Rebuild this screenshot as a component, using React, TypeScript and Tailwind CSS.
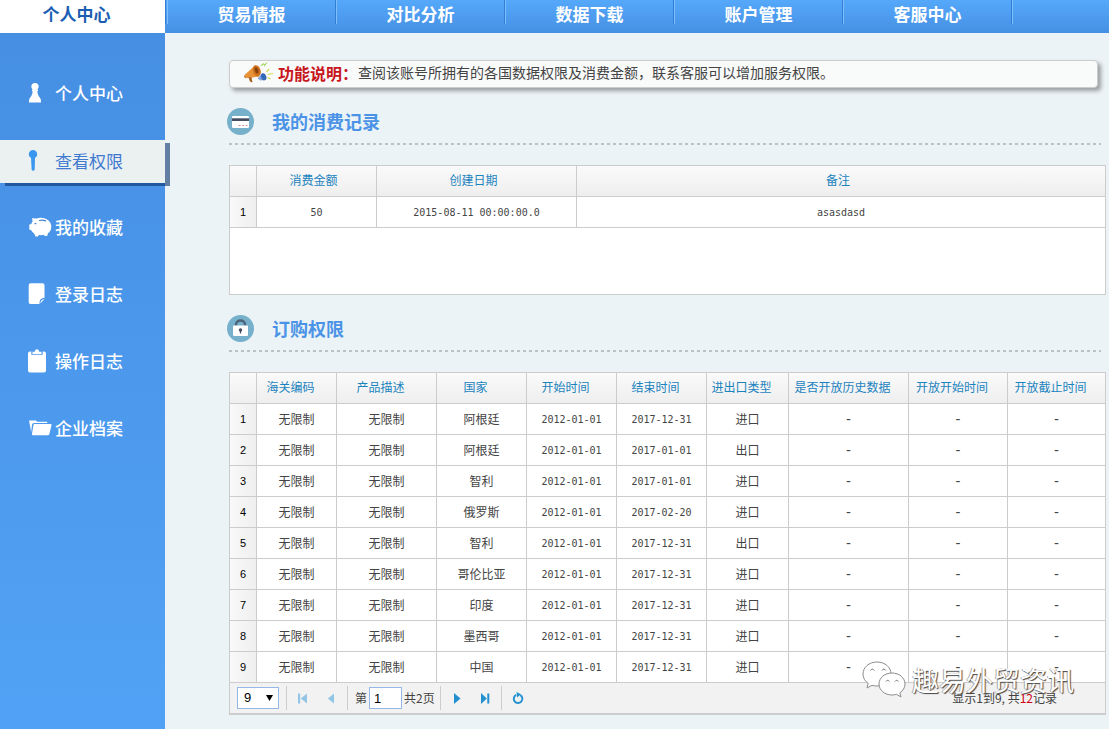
import type { ReactNode } from "react";

const navItems = ["贸易情报", "对比分析", "数据下载", "账户管理", "客服中心"];

function PawnIcon() {
  return (
    <svg width="14" height="20" viewBox="0 0 14 20" fill="currentColor">
      <path d="M7 0C9.400 0 10.700 1.600 10.700 3.500c0 1.200-.6 2-1.300 2.700l.6.5v1.200l-.7.6c.3 3 1.500 4.800 2.800 6.500.8 1 .9 2.500.9 4.500H1c0-2 .1-3.500.9-4.500 1.300-1.700 2.500-3.500 2.800-6.500L4 7.900V6.700l.6-.5C3.900 5.500 3.300 4.700 3.300 3.500 3.300 1.600 4.600 0 7 0z" />
    </svg>
  );
}

function KeyIcon() {
  return (
    <svg width="10" height="21" viewBox="0 0 10 21" fill="#3b97ee">
      <path d="M5 0a4.200 4.200 0 0 1 4.200 4.200c0 1.700-1 2.900-2.200 3.500l-.3 12-1.500 1.300L3.700 20 3 7.700C1.800 7.100.8 5.900.8 4.200A4.200 4.200 0 0 1 5 0z" />
    </svg>
  );
}

function PiggyIcon() {
  return (
    <svg width="24" height="21" viewBox="0 0 24 21">
      <path
        d="M4 1.200 8.700 1.600C10.500.9 12.300.6 14.500 1c5 .5 8.800 3.900 8.800 8.400 0 3.200-1.200 5.500-3.400 6.900l-.7 2.700h-2.600l-.7-1.200c-1.700.4-3.400.4-5 .2L9.900 19.500H7.500L6.200 16.500c-1.400-.8-2.300-1.900-2.900-3.200L1.300 12.500V7.500l2-.6c.3-.9.800-1.700 1.300-2.300z"
        fill="#fff"
      />
      <path d="M11.500 3.500c2-.5 4.200-.4 6 .4M7 6.700h.8" fill="none" stroke="#3f7fd0" strokeWidth="1.200" strokeLinecap="round" />
    </svg>
  );
}

function NoteIcon() {
  return (
    <svg width="18" height="22" viewBox="0 0 18 22" fill="#fff">
      <path d="M2.500 0.300h12a2 2 0 0 1 2 2v12.800h-1.500c-2.300.4-3.800 2.600-3.500 5.900H2.500a1.800 1.800 0 0 1-1.800-1.800V2.100A1.800 1.800 0 0 1 2.500.3z" />
      <path d="M16.500 16l-4.200 4.500c0-2.500 1.700-4.300 4.200-4.500z" />
    </svg>
  );
}

function ClipboardIcon() {
  return (
    <svg width="18" height="24" viewBox="0 0 18 24" fill="#fff">
      <path d="M2 2.500h1.300v3.300h11.400V2.500H16a2 2 0 0 1 2 2v17a2 2 0 0 1-2 2H2a2 2 0 0 1-2-2v-17a2 2 0 0 1 2-2z" />
      <path d="M4.500 4.900V2.800h2.300C7 1.200 7.600.2 9 .2s2 1 2.200 2.600h2.300v2.100z" />
    </svg>
  );
}

function FolderIcon() {
  return (
    <svg width="24" height="17" viewBox="0 0 24 17" fill="#fff">
      <path d="M1 .5h7L9.200 1.800h10v1.200H6a2 2 0 0 0-2 1.600L3.200 12z" />
      <path d="M7 4h15.500a1 1 0 0 1 1 1.200l-2.200 9a1.400 1.400 0 0 1-1.400 1H5a1 1 0 0 1-1-1.200l1.400-8.700A1.500 1.500 0 0 1 7 4z" />
    </svg>
  );
}

const sideItems: { label: string; icon: ReactNode; active?: boolean }[] = [
  { label: "个人中心", icon: <PawnIcon /> },
  { label: "查看权限", icon: <KeyIcon />, active: true },
  { label: "我的收藏", icon: <PiggyIcon /> },
  { label: "登录日志", icon: <NoteIcon /> },
  { label: "操作日志", icon: <ClipboardIcon /> },
  { label: "企业档案", icon: <FolderIcon /> },
];

function Megaphone() {
  return (
    <svg width="30" height="24" viewBox="0 0 30 24" aria-hidden="true">
      <path d="M.5 14 11 4.500l4 11-9.500 1.500L1.500 17z" fill="#e8923a" />
      <path d="m4.500 16.500 3-.3 1 5.300-2.500-1z" fill="#a5601f" />
      <path d="m.5 14 1.500 3.500L.2 16z" fill="#a5601f" />
      <ellipse cx="12.800" cy="9.800" rx="3.800" ry="5.800" transform="rotate(-18 12.800 9.800)" fill="#d0721c" />
      <ellipse cx="12.600" cy="9.400" rx="1.800" ry="3.300" transform="rotate(-18 12.600 9.400)" fill="#8a430f" />
      <path d="m13.500 17.500 4.500-5 3.500 6-5 1z" fill="#7ea5de" />
      <ellipse cx="19.700" cy="15.800" rx="2.600" ry="3.700" transform="rotate(-18 19.700 15.800)" fill="#3568b8" />
      <path d="m16 5 4-3.200-.7 2.300L24 .8l-4 5 .3-2z" fill="#8fcf3c" />
      <path d="m22.500 11 2.500-3M23.500 13.500l5.500-1M23.500 16.500l3 1.500" stroke="#cfdc50" strokeWidth="1.200" />
    </svg>
  );
}

function CardBadge() {
  return (
    <svg width="27" height="27" viewBox="0 0 27 27" aria-hidden="true">
      <circle cx="13.500" cy="13.500" r="13.500" fill="#76b0cb" />
      <rect x="5" y="8" width="17" height="12" rx="1.200" fill="#fff" />
      <rect x="5" y="10.300" width="17" height="2.700" fill="#434c60" />
      <path d="M11.500 17.500h2M15 17.500h2M18.500 17.500h2" stroke="#e39a9a" strokeWidth="1.200" />
    </svg>
  );
}

function LockBadge() {
  return (
    <svg width="27" height="27" viewBox="0 0 27 27" aria-hidden="true">
      <circle cx="13.500" cy="13.500" r="13.500" fill="#76b0cb" />
      <path d="M9 10.500V9.500a4.500 4.000 0 0 1 9 0v1" fill="none" stroke="#4c6378" strokeWidth="2.400" />
      <rect x="6" y="10.500" width="15" height="10.500" rx="1" fill="#fff" />
      <circle cx="13.500" cy="15" r="1.700" fill="#434c60" />
      <path d="M13.500 15v3.500" stroke="#434c60" strokeWidth="1.200" />
    </svg>
  );
}

function SectionHeading({ icon, title }: { icon: ReactNode; title: string }) {
  return (
    <header className="mr-[5px] pt-5 pb-5">
      <div className="-ml-0.5 flex h-[27px] items-center gap-[18px]">
        {icon}
        <h2 className="text-[18px] leading-[27px] font-bold text-[#4b93e6]">{title}</h2>
      </div>
      <div className="mt-2 h-0.5 bg-[repeating-linear-gradient(90deg,#bbc2c4_0_3px,transparent_3px_6px)]" />
    </header>
  );
}

const edge = "border-r border-b border-[#ccc]";
const headCell = "border-r border-b border-[#ccc] pb-0.5 text-[12px] font-normal text-[#1b83be]";
const numberCell =
  "border-r border-b border-[#ccc] bg-linear-to-r from-[#f9f9f9] to-[#efefef] font-['Liberation_Sans'] text-[11px] font-normal text-black";
const mono = "font-['DejaVu_Sans_Mono','Noto_Sans_CJK_SC',monospace] text-[10px]";
const dash = "font-['DejaVu_Sans_Mono','Noto_Sans_CJK_SC',monospace] text-[14px] leading-4";

const columns = [
  { label: "海关编码", width: "w-[80px]" },
  { label: "产品描述", width: "w-[100px]" },
  { label: "国家", width: "w-[90px]" },
  { label: "开始时间", width: "w-[90px]" },
  { label: "结束时间", width: "w-[90px]" },
  { label: "进出口类型", width: "w-[82px]" },
  { label: "是否开放历史数据", width: "w-[120px]" },
  { label: "开放开始时间", width: "w-[99px]" },
  { label: "开放截止时间", width: "" },
];

const rows = [
  ["阿根廷", "2017-12-31", "进口"],
  ["阿根廷", "2017-01-01", "出口"],
  ["智利", "2017-01-01", "进口"],
  ["俄罗斯", "2017-02-20", "进口"],
  ["智利", "2017-12-31", "出口"],
  ["哥伦比亚", "2017-12-31", "进口"],
  ["印度", "2017-12-31", "进口"],
  ["墨西哥", "2017-12-31", "进口"],
  ["中国", "2017-12-31", "进口"],
];

function PagerDivider() {
  return <span className="h-6 w-px bg-[#ccc]" />;
}

function PagerButton({ label, disabled, children }: { label: string; disabled?: boolean; children: ReactNode }) {
  return (
    <button
      type="button"
      aria-label={label}
      disabled={disabled}
      className="flex h-6 w-7 items-center justify-center text-[#2390d0] disabled:text-[#92c6e4]"
    >
      {children}
    </button>
  );
}

function Pager() {
  return (
    <div className="flex h-8 items-center border-b-2 border-[#ccc] bg-[#f2f2f2] pl-[7px] text-[12px] text-[#444]">
      <div className="relative mr-[7px]">
        <select
          aria-label="每页条数"
          defaultValue="9"
          className="h-[22px] w-[42px] appearance-none border border-[#95b8e7] bg-white pl-1.5 font-['Liberation_Sans'] text-[13px] text-black"
        >
          <option>9</option>
          <option>18</option>
          <option>27</option>
        </select>
        <svg className="pointer-events-none absolute top-2 right-1.5" width="7" height="6" viewBox="0 0 7 6">
          <path d="M0 0h7L3.500 6z" fill="#000" />
        </svg>
      </div>
      <PagerDivider />
      <div className="flex px-0.5">
        <PagerButton label="首页" disabled>
          <svg width="10" height="11" viewBox="0 0 10 11" fill="currentColor">
            <path d="M0 .5h2.200v10H0zM9 .5v10L2.800 5.500z" />
          </svg>
        </PagerButton>
        <PagerButton label="上一页" disabled>
          <svg width="8" height="11" viewBox="0 0 8 11" fill="currentColor">
            <path d="M7 .5v10L.8 5.500z" />
          </svg>
        </PagerButton>
      </div>
      <PagerDivider />
      <label htmlFor="page" className="pl-[7px]">第</label>
      <input
        id="page"
        defaultValue="1"
        className="mx-0.5 h-[22px] w-[33px] border border-[#95b8e7] bg-white px-1 font-['Liberation_Sans'] text-[13px] text-black"
      />
      <span className="w-9">共2页</span>
      <PagerDivider />
      <div className="flex px-0.5">
        <PagerButton label="下一页">
          <svg width="8" height="11" viewBox="0 0 8 11" fill="currentColor">
            <path d="M1 0v11l6.500-5.500z" />
          </svg>
        </PagerButton>
        <PagerButton label="末页">
          <svg width="10" height="11" viewBox="0 0 10 11" fill="currentColor">
            <path d="M1 0v11l5.800-5.500zM7.300.5h2v10h-2z" />
          </svg>
        </PagerButton>
      </div>
      <PagerDivider />
      <div className="px-0.5">
        <PagerButton label="刷新">
          <svg width="12" height="13" viewBox="0 0 12 13" fill="none">
            <path d="M8.300 3.100a4.300 4.300 0 1 1-4.100-.2" stroke="currentColor" strokeWidth="1.900" />
            <path d="M4.500 0 9 2.300 5.200 5.600z" fill="currentColor" />
          </svg>
        </PagerButton>
      </div>
      <p className="ml-auto pr-12">
        显示1到9, 共<span className="text-[#d00018]">12</span>记录
      </p>
    </div>
  );
}

function Watermark() {
  return (
    <div className="pointer-events-none absolute right-8 bottom-4 flex items-center gap-1.5">
      <svg width="44" height="38" viewBox="0 0 44 38" fill="#fff" stroke="#8c8c8c" strokeWidth="1">
        <path d="M15 1C7 1 1 6.300 1 13c0 4 2 7.200 5.200 9.400L5 27l5-2.700c1.600.5 3.300.7 5 .7 8 0 14-5.300 14-12S23 1 15 1z" />
        <path d="M30 12c-7.200 0-13 4.900-13 11s5.800 11 13 11c1.600 0 3.100-.2 4.500-.7L39 36l-1.200-4.200C41 29.800 43 26.600 43 23c0-6.100-5.800-11-13-11z" />
        <path d="M8.500 9.500c.8-1.800 3-1.800 3.800 0M20 9.500c.8-1.800 3-1.800 3.800 0M24 20.500c.7-1.600 2.700-1.600 3.400 0M33 20.500c.7-1.600 2.700-1.600 3.400 0" fill="none" stroke="#777" />
      </svg>
      <span className="text-[27px] leading-9 text-white [text-shadow:1px_1px_1px_#444,-1px_0_0_#aaa]">趣易外贸资讯</span>
    </div>
  );
}

export default function App() {
  return (
    <div className="flex min-h-screen flex-col bg-[#ebf3f6] font-['Noto_Sans_CJK_SC',sans-serif] text-[#444]">
      <nav className="flex h-[33px] bg-linear-to-b from-[#55a8fa] to-[#4690e4] text-[17px] leading-7 font-bold text-white">
        <a href="#center" className="w-[165px] bg-white pr-3 text-center text-[#1a5fb4]">
          个人中心
        </a>
        <span className="h-6 w-[3px] border-x border-l-[#2f7fd6] border-r-[#7fbdfb]" />
        {navItems.map((label) => (
          <a key={label} href="#" className="flex w-[169px]">
            <span className="grow text-center">{label}</span>
            <span className="h-6 w-0.5 border-r border-[#7fbdfb] bg-[#2f7fd6]" />
          </a>
        ))}
      </nav>

      <div className="flex grow">
        <aside className="w-[165px] shrink-0 bg-linear-to-b from-[#468fe3] to-[#51a2f6] pt-10">
          <nav className="flex flex-col gap-6">
            {sideItems.map(({ label, icon, active }) => (
              <a
                key={label}
                href="#"
                className={
                  active
                    ? "flex h-[43px] items-center bg-[#ebf0f1] pb-0.5 pl-7 text-[17px] text-[#3f7ad0] shadow-[5px_3px_0_rgba(10,50,110,0.6)]"
                    : "flex h-[43px] items-center pb-[3px] pl-7 text-[17px] font-medium text-white"
                }
              >
                <span className="flex w-[27px]">{icon}</span>
                {label}
              </a>
            ))}
          </nav>
        </aside>

        <main className="min-w-0 grow pt-[27px] pr-[3px] pb-3.5 pl-16">
          <p className="mr-2 flex h-7 items-center rounded-sm border border-[#ccc] bg-[#f9fafa] pb-[3px] pl-3.5 text-[14px] shadow-[3px_3px_4px_rgba(0,0,0,0.35)]">
            <Megaphone />
            <strong className="ml-1 text-[16px] text-[#c8161d]">功能说明：</strong>
            查阅该账号所拥有的各国数据权限及消费金额，联系客服可以增加服务权限。
          </p>

          <section>
            <SectionHeading icon={<CardBadge />} title="我的消费记录" />
            <div className="h-[130px] border border-[#ccc] bg-white">
              <table className="w-full table-fixed border-separate border-spacing-0 text-center">
                <thead>
                  <tr className="h-[31px] bg-linear-to-b from-[#fafafa] to-[#eee]">
                    <th className={`${headCell} w-[27px]`} />
                    <th className={`${headCell} w-[120px] pr-1.5`}>消费金额</th>
                    <th className={`${headCell} w-[200px] pr-1.5`}>创建日期</th>
                    <th className="border-b border-[#ccc] pr-1.5 pb-0.5 text-[12px] font-normal text-[#1b83be]">备注</th>
                  </tr>
                </thead>
                <tbody>
                  <tr className="h-[31px]">
                    <th className={numberCell}>1</th>
                    <td className={`${edge} ${mono}`}>50</td>
                    <td className={`${edge} ${mono}`}>2015-08-11 00:00:00.0</td>
                    <td className={`border-b border-[#ccc] ${mono}`}>asasdasd</td>
                  </tr>
                </tbody>
              </table>
            </div>
          </section>

          <section className="relative">
            <SectionHeading icon={<LockBadge />} title="订购权限" />
            <div className="border border-b-0 border-[#ccc] bg-white">
              <table className="w-full table-fixed border-separate border-spacing-0 text-center text-[12px]">
                <thead>
                  <tr className="h-[31px] bg-linear-to-b from-[#fafafa] to-[#eee]">
                    <th className={`${headCell} w-[27px]`} />
                    {columns.map(({ label, width }) => (
                      <th key={label} className={`${headCell} ${width} pr-3 whitespace-nowrap last:border-r-0`}>
                        {label}
                      </th>
                    ))}
                  </tr>
                </thead>
                <tbody>
                  {rows.map(([country, end, type], i) => (
                    <tr key={i} className="h-[31px]">
                      <th className={numberCell}>{i + 1}</th>
                      <td className={edge}>无限制</td>
                      <td className={edge}>无限制</td>
                      <td className={edge}>{country}</td>
                      <td className={`${edge} ${mono}`}>2012-01-01</td>
                      <td className={`${edge} ${mono}`}>{end}</td>
                      <td className={edge}>{type}</td>
                      <td className={`${edge} ${dash}`}>-</td>
                      <td className={`${edge} ${dash}`}>-</td>
                      <td className={`border-b border-[#ccc] ${dash}`}>-</td>
                    </tr>
                  ))}
                </tbody>
              </table>
              <Pager />
            </div>
            <Watermark />
          </section>
        </main>
      </div>
    </div>
  );
}
